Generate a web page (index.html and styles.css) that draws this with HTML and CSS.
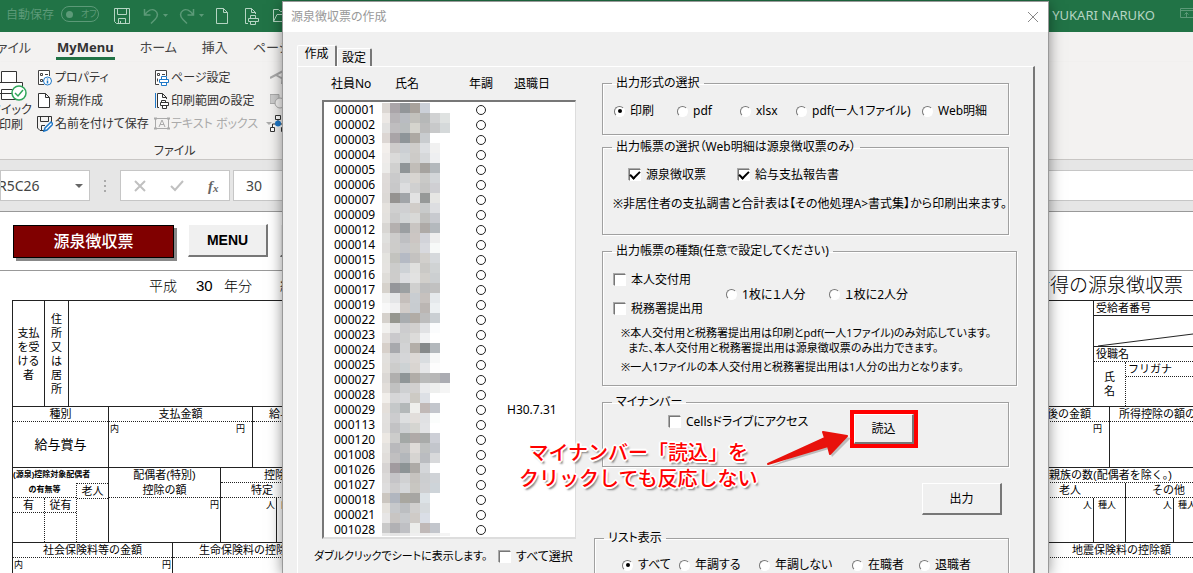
FILE: index.html
```html
<!DOCTYPE html>
<html lang="ja">
<head>
<meta charset="utf-8">
<title>源泉徴収票の作成</title>
<link rel="stylesheet" href="styles.css">
</head>
<body>
<div class="app">
  <header class="titlebar">
    <span class="autosave">自動保存</span>
    <button class="toggle" aria-label="自動保存"><i></i>オフ</button>
    <button class="tb tb-save" aria-label="保存"><svg width="18" height="18" viewBox="0 0 18 18"><path d="M1.5 1.500h15v15h-13l-2-2zM4.500 1.500v6h9v-6M5.500 16.500v-5h7v5M7.500 14v2.500"/></svg></button>
    <button class="tb tb-undo" aria-label="元に戻す"><svg width="26" height="18" viewBox="0 0 26 18"><path d="M1.500 2v6h6M2 7.500C5 3.500 9 1.500 12 3.500s3.500 5.500 0 9l-4 4"/><path class="fill" d="M20 7h5l-2.500 3z"/></svg></button>
    <button class="tb tb-undo" aria-label="やり直し"><svg width="26" height="18" viewBox="0 0 26 18"><path d="M14.500 2v6h-6M14 7.500C11 3.500 7 1.500 4 3.500s-3.500 5.500 0 9l4 4"/><path class="fill" d="M20 7h5l-2.500 3z"/></svg></button>
    <button class="tb tb-doc" aria-label="新規作成"><svg width="14" height="18" viewBox="0 0 14 18"><path d="M1.500 1.500h7l4 4v11h-11zM8.500 1.500v4h4"/></svg></button>
    <button class="tb tb-print" aria-label="印刷プレビュー"><svg width="16" height="18" viewBox="0 0 16 18"><path d="M4 16.500H1.500v-15h6l4 4V7M7.500 1.500v4h4M6.500 11V8.500h5V11M4.500 11.500h10v3h-10zM6.500 14.500h5v3h-5z"/></svg></button>
    <button class="tb" aria-label="開く"><svg width="20" height="18" viewBox="0 0 20 18"><path d="M1.500 14.500v-12h5l2 2h7v3M1.500 14.500l3.500-7h13l-3.500 7z"/></svg></button>
    <span class="user">YUKARI NARUKO</span>
    <button class="tb tb-view dim" aria-label="リボンの表示オプション"><svg width="16" height="14" viewBox="0 0 16 14"><path d="M.5 1.500h15v9H.5zM.5 3.500h15M6.500 10V5.500M4.500 7.500l2-2 2 2"/></svg></button>
  </header>

  <nav class="tabs">
    <a href="#">ファイル</a>
    <a href="#" class="on">MyMenu</a>
    <a href="#">ホーム</a>
    <a href="#">挿入</a>
    <a href="#">ページ</a>
  </nav>

  <section class="ribbon">
    <button class="big">
      <svg width="36" height="32" viewBox="0 0 36 32"><path fill="#fff" stroke="#333" d="M8.500 12V1.500h15V12M1.500 12.500h28v11h-28zM8.500 19.500h15v10h-15z"/><path stroke="#333" stroke-width="2" d="M3 14.500h3"/><circle cx="26" cy="23" r="7" fill="#fff" stroke="#2fa65a" stroke-width="1.500"/><path fill="none" stroke="#2fa65a" stroke-width="1.500" d="M22 23l3 3 5-6"/></svg>
      <span>クイック</span><span>印刷</span>
    </button>
    <div class="col col-a">
      <button class="cmd"><svg width="16" height="18" viewBox="0 0 16 18"><path fill="#fff" stroke="#444" d="M7 15.500H1.500v-14h11V7"/><path stroke="#444" fill="none" d="M3.500 4.500h2v2h-2zM8 5.500h3M3.500 10.500h2v2h-2z"/><circle cx="10.500" cy="12" r="4" fill="#fff" stroke="#1e78c8"/><path stroke="#1e78c8" stroke-width="1.500" d="M10.500 11.500v3M10.500 9.500v1"/></svg>プロパティ</button>
      <button class="cmd"><svg width="16" height="18" viewBox="0 0 16 18"><path fill="#fff" stroke="#333" d="M1.500 1.500h7l4 4v10h-11zM8.500 1.500v4h4"/></svg>新規作成</button>
      <button class="cmd"><svg width="16" height="18" viewBox="0 0 16 18"><path fill="none" stroke="#333" d="M7 15.500H3L.5 13V1.500h14V7M3.500 1.500v5h8v-5M4.500 15v-4.500H8"/><path fill="#fff" stroke="#1e78c8" stroke-width="1.500" d="M7 16l1-3 6-6 2 2-6 6z"/></svg>名前を付けて保存</button>
    </div>
    <div class="col col-b">
      <button class="cmd"><svg width="16" height="18" viewBox="0 0 16 18"><path fill="#fff" stroke="#444" d="M5 15.500H1.500v-14h11V7"/><path stroke="#444" fill="none" d="M3.500 4.500h2v2h-2zM8 5.500h3M3.500 9.500v3"/><path fill="#fff" stroke="#1e78c8" d="M7.500 10V7.500h5V10M5.500 10.500h9v3h-9zM7.500 13.500h5v3h-5z"/></svg>ページ設定</button>
      <button class="cmd"><svg width="16" height="18" viewBox="0 0 16 18"><path fill="#fff" stroke="#333" d="M5 15.500H3.500v-14h5l4 4V7M8.500 1.500v4h4M7.500 10V8.500h4V10M6.500 10.500h8v3h-8zM8.500 13.500h4v3h-4z"/><path stroke="#1e78c8" d="M1.500 1v15"/></svg>印刷範囲の設定</button>
      <button class="cmd off"><svg width="16" height="18" viewBox="0 0 16 18"><path fill="none" stroke="#aaa" d="M1.500 3.500h13v10h-13zM5 12l3-7 3 7M6 9.500h4"/><path stroke="#aaa" stroke-width="2" d="M0 3.500h3M13 3.500h3M0 13.500h3M13 13.500h3"/></svg>テキスト ボックス<i class="caret"></i></button>
      <span class="group-name">ファイル</span>
    </div>
    <div class="col">
      <button class="cmd" aria-label="ワードアート"><svg width="16" height="18" viewBox="0 0 16 18"><path fill="none" stroke="#aaa" stroke-width="2" d="M0 9L13 2l-1 13M6 6l7 4"/></svg></button>
      <button class="cmd" aria-label="図形"><svg width="16" height="18" viewBox="0 0 16 18"><path fill="#ccc" stroke="#aaa" d="M0 2.500h9v9H0z"/><circle cx="10" cy="11" r="5" fill="#f3f2f1" stroke="#aaa"/></svg></button>
      <button class="cmd" aria-label="組織図"><svg width="16" height="18" viewBox="0 0 16 18"><path fill="#fff" stroke="#333" d="M5.500.5h5v4h-5zM.5 12.500h4v4h-4zM11.500 12.500h4v4h-4zM2.500 12V9h11v3M8 5v4"/><circle cx="8" cy="8.500" r="3" fill="#1e78c8"/></svg></button>
    </div>
  </section>

  <section class="formula">
    <div class="namebox"><input aria-label="名前ボックス" value="R5C26"><i class="caret"></i></div>
    <span class="grip"><i></i><i></i><i></i></span>
    <div class="fx">
      <button aria-label="キャンセル"><svg width="12" height="12" viewBox="0 0 12 12"><path d="M1 1l10 10M11 1L1 11"/></svg></button>
      <button aria-label="入力"><svg width="14" height="12" viewBox="0 0 14 12"><path d="M1 6l4 4 8-9"/></svg></button>
      <button class="fn"><i>f</i><sub>x</sub></button>
    </div>
    <input class="bar" aria-label="数式バー" value="30">
  </section>

  <main class="sheet">
    <div class="actions">
      <button class="crimson">源泉徴収票</button>
      <button class="raised menu">MENU</button>
      <button class="raised more" aria-label="印刷"></button>
    </div>
    <div class="heading">
      <span class="era">平成</span><span class="year">30</span><span class="era">年分</span><span class="era pay">給</span>
      <span class="doc-name">所得の源泉徴収票</span>
    </div>

    <div class="form">
      <div class="band band-a">
        <div class="cell payer"><p>支払を受ける者</p></div>
        <div class="cell address"><p>住所又は居所</p></div>
        <div class="cell grow"></div>
        <div class="cell person">
          <div class="line pad">受給者番号</div>
          <svg class="slash" viewBox="0 0 100 30" preserveAspectRatio="none"><path d="M4 30L100 18"/></svg>
          <div class="line pad role">役職名</div>
          <div class="person-name">
            <div class="shimei"><span>氏</span><span>名</span></div>
            <div class="furi"><div class="line pad dot-b">フリガナ</div></div>
          </div>
        </div>
      </div>

      <div class="band">
        <div class="cell w95"><div class="line mid dot-b">種別</div><div class="big-value">給与賞与</div></div>
        <div class="cell w144"><div class="line mid dot-b">支払金額</div><div class="unit"><span>内</span><span class="yen">円</span></div></div>
        <div class="cell grow"><div class="line dot-b in16">給与</div></div>
        <div class="cell w144 bare"><div class="line end dot-b">後の金額</div><div class="unit"><span></span><span class="yen">円</span></div></div>
        <div class="cell w84"><div class="line dot-b in10">所得控除の額の</div></div>
      </div>

      <div class="band">
        <div class="cell w95 spouse">
          <div class="line tiny">(源泉)控除対象配偶者</div>
          <div class="split">
            <div class="spouse-has">
              <div class="line tiny mid dot-b">の有無等</div>
              <div class="split">
                <div class="yes"><div class="line mid dot-b">有</div></div>
                <div class="also"><div class="line mid dot-b">従有</div></div>
              </div>
            </div>
            <div class="aged"><div class="line mid dot-b">老人</div></div>
          </div>
        </div>
        <div class="cell w112"><div class="line mid">配偶者(特別)</div><div class="line mid dot-b">控除の額</div><div class="unit"><span></span><span>円</span></div></div>
        <div class="cell grow">
          <div class="line dot-b in44">控除</div>
          <div class="line dot-b in30">特定</div>
          <div class="split"><div class="unit w56"><span></span><span>人</span></div><div class="unit rule"><span>内</span></div></div>
        </div>
        <div class="cell w160 bare">
          <div class="line dot-b in16">親族の数(配偶者を除く。)</div>
          <div class="split">
            <div class="kin-aged">
              <div class="line dot-b in26">老人</div>
              <div class="split"><div class="unit w60"><span></span><span>人</span></div><div class="unit rule"><span>種人</span></div></div>
            </div>
            <div class="kin-other">
              <div class="line dot-b in26">その他</div>
              <div class="split"><div class="unit w47"><span></span><span>人</span></div><div class="unit rule"><span>種人</span></div></div>
            </div>
          </div>
        </div>
      </div>

      <div class="band">
        <div class="cell w159"><div class="line mid dot-b">社会保険料等の金額</div><div class="unit"><span>内</span><span>円</span></div></div>
        <div class="cell grow"><div class="line dot-b in26">生命保険料の控除</div></div>
        <div class="cell w160 bare"><div class="line dot-b in40">地震保険料の控除額</div></div>
      </div>
    </div>
  </main>

  <div class="dialog" role="dialog" aria-label="源泉徴収票の作成">
    <div class="dialog-title"><span>源泉徴収票の作成</span><button aria-label="閉じる"><svg width="12" height="12" viewBox="0 0 12 12"><path d="M1 1l10 10M11 1L1 11"/></svg></button></div>
    <div class="dialog-tabs"><button class="current">作成</button><button>設定</button></div>
    <div class="page">
      <div class="left">
        <table class="staff">
          <thead><tr><th>社員No</th><th>氏名</th><th>年調</th><th>退職日</th></tr></thead>
          <tbody id="staff"></tbody>
        </table>
        <div class="list-foot">
          <span>ダブルクリックでシートに表示します。</span>
          <label class="all"><input type="checkbox">すべて選択</label>
        </div>
      </div>
      <div class="right">
        <fieldset class="format">
          <legend>出力形式の選択</legend>
          <label><input type="radio" name="format" checked>印刷</label>
          <label><input type="radio" name="format">pdf</label>
          <label><input type="radio" name="format">xlsx</label>
          <label><input type="radio" name="format">pdf(一人1ファイル)</label>
          <label><input type="radio" name="format">Web明細</label>
        </fieldset>
        <fieldset class="report">
          <legend>出力帳票の選択（Web明細は源泉徴収票のみ）</legend>
          <div class="report-row">
            <label><input type="checkbox" checked>源泉徴収票</label>
            <label><input type="checkbox" checked>給与支払報告書</label>
          </div>
          <p>※非居住者の支払調書と合計表は【その他処理A&gt;書式集】から印刷出来ます。</p>
        </fieldset>
        <fieldset class="kind">
          <legend>出力帳票の種類(任意で設定してください)</legend>
          <div class="kind-grid">
            <div class="kind-checks">
              <label><input type="checkbox">本人交付用</label>
              <label><input type="checkbox">税務署提出用</label>
            </div>
            <label><input type="radio" name="per">1枚に１人分</label>
            <label><input type="radio" name="per">１枚に2人分</label>
          </div>
          <p class="hang">※本人交付用と税務署提出用は印刷とpdf(一人1ファイル)のみ対応しています。<br>また、本人交付用と税務署提出用は源泉徴収票のみ出力できます。</p>
          <p>※一人1ファイルの本人交付用と税務署提出用は1人分の出力となります。</p>
        </fieldset>
        <fieldset class="mynumber">
          <legend>マイナンバー</legend>
          <div class="mynumber-row">
            <label><input type="checkbox">Cellsドライブにアクセス</label>
            <span class="mark"><button class="raised">読込</button></span>
          </div>
        </fieldset>
        <button class="raised output">出力</button>
        <fieldset class="filter">
          <legend>リスト表示</legend>
          <label><input type="radio" name="filter" checked>すべて</label>
          <label><input type="radio" name="filter">年調する</label>
          <label><input type="radio" name="filter">年調しない</label>
          <label><input type="radio" name="filter">在職者</label>
          <label><input type="radio" name="filter">退職者</label>
        </fieldset>
      </div>
    </div>
    <svg class="mosaic" id="mosaic" width="84" height="433"></svg>
    <p class="note">マイナンバー「読込」を<br>クリックしても反応しない</p>
    <svg class="arrow" width="90" height="44" viewBox="0 0 90 44"><path fill="#888" opacity=".5" d="M6 40l59-25-3-8 26 4-19 19-3-8z"/><path fill="#e8120c" stroke="#e8120c" stroke-width="2" stroke-linejoin="round" d="M5 37l57-26-2-6 24 4-17 18-2-8z"/></svg>
  </div>
</div>
<script src="script.js"></script>
</body>
</html>
```
FILE: script.js
```js
const codes = ('000001 000002 000003 000004 000005 000006 000007 000009 000012 000014 ' +
  '000015 000016 000017 000019 000022 000023 000024 000025 000027 000028 ' +
  '000029 000113 000120 001008 001026 001027 000018 000021 001028').split(' ');
const retired = { '000029': 'H30.7.31' };

document.getElementById('staff').innerHTML = codes.map(code =>
  `<tr><td>${code}</td><td></td><td><svg class="ring" width="12" height="12" viewBox="0 0 12 12"><circle cx="6" cy="6" r="4.500"/></svg></td><td>${retired[code] || ''}</td></tr>`
).join('');

// Pixelated name column: one line per 10px strip, one colour per block.
const strips = `dcd7d3 aaa5a9 929699 a8a29c cbd0d8
ece8e5 b7b4b7 b9bcc1 c2c1bc b6b8b8 d1d2d3 dfe2e1
e2e1e0 bfbdbf b9bdbe d5d4cd bcbcbc c8c9ca d5d9da
dcd6d3 a9a4a7 8e9599 ada9a3 c9cccf
f3efec cecccb cbcfd3 cfcdca dddfe2 f1f1f1
efecea dadad9 d1d5d7 cdcbc8 d6d8da eeeff1
ecebe9 d0d0cf 8f9598 c1bdb8 a6a39f b3b8bc
dfdbd9 cacacb d2d4d6 d8d5d1 c9c9c7 d3d6d9
dedad8 c8c8c9 dcdddf d0d0d0 c5c5c4 cfcfd3
dcd9d6 959391 a1a5a9 e2e2e2 969998 e6e6e4
e5e2de cfcfcf cfd0d2 d1cdc9 c8caca dddee1
e3e1de cacaca d3d6d7 d9d9d7 bfbfbd c8cacf
d8d6d3 b4b0af 9b9fa2 c9c5c2 aeaaa7 b4b9bd
e0e0de cdcccb bebfc2 ccc6c3 d2d3d9 eeeeee
dedcda cdccca c7c8cb cccac6 d8d9de f7f9f8
e4e3df c3c3bf b5bac4 c4c2c0 d1cfcc d6d9dc
e5e3e0 cccccb ced2d6 e0e0de cac9c6 d0d3d4
dfddd9 cdcccb dddee1 e2e2e1 d1cfcb cccfd1
d6d2cc 95969a 9ca0a2 d0d0cf bebebe c1c1c1
f0f0ef e4e5e7 c5bfbc c9cdd1 c6c1be e5e9ec
f8f8f8 f0f0f1 d1ccc9 c8ccd0 bbb6b3 ecf0f2
d5d1cc 95968f a9adb0 b1aca6 bdbdbd cacfd3
f2f1ef e1e1e1 ccccce d2d0ce e1e2e4 fbfcfd
e4e0dd cac9cc cfd0d0 dcdbd9 f1f2f3
d7d0ca a8a9ad d2d3d4 b3aea8 868a8b b3b8bc
e2e0dd d1d1d2 d5d6d8 dcd8d5 d9dde0 f7f8f8
e2dfdb cccccb cdd2d4 d9d5d1 e6e7e9 fdfdfd
dbd8d5 b0afae 8f9698 b1ada8 babbbb b7b7b7 abacb2
e2deda c1c1c1 ced0d2 d2d0cf e9eaec eeefee f5f5f5
f1eeea d6d6d7 d9dadd cdcac4 dde0e5
e4dfda c5c8c9 b3b8b9 efefec c1b9b7 c3c6cc
e2e0de ccccce dddfe0 e2dedb e0e1e3 fbfdfc
e1dfdd c2c2c4 cdd0d2 d5d5d1 e2e3e5
ece8e3 cccccb a3a8a6 b0aaa8 a9abaa cdcfd6
e4e2df b9b9bc bebfc0 dfdbd8 bec0c0 c3c6cc
e1dedb c0bfc0 b3b7bb d6d4d1 babcc0 d8d9db
d7d4d3 a19b9f 8d9496 adaaa6 d4d6d9
dcdad9 c5c4c7 d0d1d2 c6c3bf ccced0 d0d3d7
dedddd cdcccd d6d8da c8c6c1 cecfd1 ced4d9
cbc6c0 b1b6bf a9a7a0 a7a6a3 dce2e6
e5e2dd c6c8cb bcbec1 d0cfce d6dadd
e7e6e6 c8c5c3 c7c9cc cfcbc7 dadee6
c9c9c9 b1b1b4 bfc0c4 ecedeb c0b9b8 c3c6cc
e8e8e8 e4e4e4 e6e6e6 efefef ededed f0f0f0 f4f4f4`.split('\n');

document.getElementById('mosaic').innerHTML = strips.map((strip, row) =>
  strip.split(' ').map((c, i) =>
    `<rect x="${i ? i * 10 - 2 : 0}" y="${row * 10}" width="${i ? 10 : 8}" height="10" fill="#${c}"/>`
  ).join('')
).join('');
```
FILE: styles.css
```css
* { box-sizing: border-box; }

body {
  margin: 0;
  font: 12px/16px "Noto Sans", "Noto Sans CJK JP", sans-serif;
  font-feature-settings: "palt";
  color: #000;
}

button, input { font: inherit; font-feature-settings: inherit; color: inherit; margin: 0; padding: 0; }
button { border: 0; background: none; white-space: nowrap; }
p { margin: 0; }
svg { display: block; flex: none; }
a { color: inherit; text-decoration: none; }

.app { position: relative; height: 100vh; overflow: hidden; background: #fff; display: flex; flex-direction: column; }
.app > * { flex: none; }

/* Title bar */
.titlebar { display: flex; align-items: center; height: 32px; padding-left: 6px; background: #217346; color: #5c9a78; }
.autosave { width: 55px; padding-bottom: 3px; }
.toggle { display: flex; align-items: center; gap: 8px; width: 38px; height: 16px; margin: 0 14px 4px 0; padding-left: 4px; border: 1px solid #5c9a78; border-radius: 8px; font-size: 9px; line-height: 12px; color: #5c9a78; }
.toggle i { width: 7px; height: 7px; border-radius: 50%; background: #5c9a78; }
.tb svg { fill: none; stroke: #b5d5c3; }
.tb-save { margin-right: 12px; }
.tb-undo { margin-right: 10px; }
.tb-undo svg, .dim svg { stroke: #5c9a78; }
.tb-undo svg { stroke-width: 1.5; }
.tb-undo .fill { fill: #5c9a78; stroke: none; }
.tb-doc { margin-right: 15px; }
.tb-print { margin-right: 12px; }
.user { margin-left: auto; margin-right: 25px; padding-bottom: 3px; color: #b5d5c3; font-size: 13px; }
.tb-view { width: 13px; overflow: hidden; padding-bottom: 4px; }

/* Ribbon */
.tabs { display: flex; gap: 25px; height: 30px; padding-top: 3px; background: #f3f2f1; font-size: 13px; line-height: 24px; color: #444; }
.tabs a { white-space: nowrap; }
.tabs a:first-child { margin-left: -14px; }
.tabs .on { padding: 0 1px; border-bottom: 3px solid #217346; height: 25px; font-weight: 700; color: #333; }
.ribbon { display: flex; height: 98px; padding-top: 4px; border-bottom: 1px solid #c8c6c4; background: #f3f2f1; color: #333; box-shadow: 0 2px 3px #d0d0d0; }
.big { display: flex; flex-direction: column; align-items: center; width: 38px; margin-left: -8px; padding-top: 4px; line-height: 15px; }
.col { display: flex; flex-direction: column; }
.col-a { width: 118px; margin-left: 7px; }
.col-b { width: 116px; margin-left: -1px; }
.cmd { display: flex; align-items: center; gap: 2px; height: 23px; }
.col-b .cmd { gap: 1px; }
.cmd.off { color: #aaa; }
.caret { width: 0; border: 4px solid transparent; border-top-color: #666; border-bottom: 0; }
.off .caret { border-width: 3px; border-bottom: 0; border-top-color: #aaa; margin-left: 7px; }
.group-name { padding-top: 8px; }

/* Formula bar */
.formula { display: flex; align-items: center; height: 51px; background: #e6e6e6; color: #444; font-size: 14px; }
.formula > div, .bar { height: 31px; background: #fff; border: 1px solid #c6c6c6; }
.namebox { display: flex; align-items: center; width: 90px; border-left: 0; padding-right: 6px; }
.namebox input { flex: 1; min-width: 0; border: 0; background: none; text-indent: -3px; }
.grip { display: grid; gap: 3px; width: 30px; justify-content: center; }
.grip i { width: 2px; height: 2px; background: #aaa; }
.fx { display: flex; align-items: center; gap: 24px; width: 110px; padding-left: 13px; }
.fx svg { fill: none; stroke: #c0c0c0; stroke-width: 2; }
.fn { font-family: "Liberation Serif", serif; font-size: 15px; font-weight: 700; line-height: 20px; color: #666; }
.fn sub { font-size: 11px; font-style: italic; vertical-align: -1px; line-height: 0; }
.bar { flex: 1; min-width: 0; margin-left: 3px; padding-left: 12px; border-right: 0; }

/* Worksheet */
.sheet { border-top: 1px solid #999; font-family: "Liberation Sans", "Noto Sans CJK JP", sans-serif; font-feature-settings: normal; font-size: 11px; white-space: nowrap; }
.actions { display: flex; align-items: flex-start; height: 59px; padding: 12px 0 0 13px; border-bottom: 1px solid #999; }
.crimson { width: 161px; height: 33px; margin: 1px 14px 0 0; border: 1px solid #000; background: #800000; color: #fff; font-size: 16px; font-weight: 500; box-shadow: 3px 3px #888; }
.raised { background: #f0f0f0; border: solid; border-width: 1px 2px 2px 1px; border-color: #fff #777 #777 #fff; }
.menu { width: 80px; height: 33px; margin-right: 12px; font-size: 14px; font-weight: 700; color: #000; }
.more { width: 80px; height: 33px; }
.heading { display: flex; align-items: center; height: 29px; padding-left: 149px; }
.era, .year { font-size: 14px; font-weight: 300; }
.year { font-size: 15px; width: 28px; margin-left: 19px; }
.pay { margin-left: 28px; }
.doc-name { margin-left: auto; margin-right: 10px; font-size: 19px; font-weight: 300; }

.form { margin-left: 12px; border-left: 1px solid #222; }
.band { display: flex; min-height: 60px; border-top: 1px solid #222; }
.band:nth-child(1) { min-height: 106px; }
.band:nth-child(3) { min-height: 75px; }
.cell { display: flex; flex-direction: column; flex: none; overflow: hidden; border-left: 1px solid #222; }
.cell:first-child, .bare { border-left: 0; }
.grow { flex: 1; }
.w95 { width: 95px; } .w144 { width: 144px; } .w112 { width: 112px; } .w159 { width: 159px; } .w160 { width: 160px; } .w84 { width: 84px; }
.w56 { flex: 0 0 55px; } .w60 { flex: 0 0 60px; } .w47 { flex: 0 0 47px; }
.line { height: 15px; line-height: 14px; overflow: hidden; }
.dot-b { border-bottom: 1px dotted #222; }
.mid { text-align: center; }
.end { text-align: right; padding-right: 18px; }
.in10 { padding-left: 9px; } .in16 { padding-left: 16px; } .in26 { padding-left: 26px; }
.in30 { padding-left: 30px; } .in40 { padding-left: 39px; } .in44 { padding-left: 43px; }
.tiny { font-size: 8px; font-weight: 700; }
.pad { padding-left: 2px; }
.unit { display: flex; justify-content: space-between; padding: 0 1px; font-size: 9px; line-height: 15px; }
.yen { padding-right: 6px; }
.big-value { font-size: 13px; line-height: 45px; text-align: center; }
.split { display: flex; flex: 1; }
.rule { border-left: 1px solid #222; flex: 1; padding-left: 4px; }
.payer { width: 31px; align-items: center; justify-content: center; white-space: normal; line-height: 14px; text-align: center; }
.payer p { width: 22px; }
.address { width: 24px; align-items: center; justify-content: center; white-space: normal; line-height: 14px; }
.address p { width: 11px; }
.person { width: 100px; }
.person .line { border-bottom: 1px solid #222; }
.slash { width: 100%; height: 30px; fill: none; stroke: #222; }
.person .role { border-top: 1px solid #222; border-bottom: 1px dotted #222; height: 16px; }
.person .furi .line { border-bottom-style: dotted; }
.person-name { display: flex; flex: 1; }
.shimei { display: flex; flex-direction: column; align-items: center; justify-content: center; width: 31px; line-height: 14px; }
.furi { flex: 1; border-left: 1px dotted #222; }
.spouse-has { display: flex; flex-direction: column; flex: 0 0 63px; }
.yes { flex: 0 0 31px; }
.also, .aged { flex: 1; border-left: 1px dotted #222; }
.aged { border-top: 1px dotted #222; }
.kin-aged { flex: 0 0 92px; display: flex; flex-direction: column; }
.kin-other { flex: 1; display: flex; flex-direction: column; border-left: 1px solid #222; }

/* Dialog window, floating over the workbook */
.dialog { position: absolute; left: 283px; top: 2px; bottom: 0; width: 765px; background: #f0f0f0; box-shadow: 0 0 0 1px #999, 0 2px 14px rgba(0, 0, 0, .5); white-space: nowrap; }
.dialog-title { display: flex; align-items: center; justify-content: space-between; height: 30px; padding: 0 9px 1px 8px; background: #fff; color: #999; }
.dialog-title svg { fill: none; stroke: #888; }
.dialog-tabs { display: flex; align-items: flex-end; padding: 12px 0 0 14px; height: 34px; }
.dialog-tabs button { height: 18px; width: 35px; border: 1px solid #fff; border-right: 2px solid #777; border-bottom: 0; border-radius: 2px 2px 0 0; line-height: 16px; }
.dialog-tabs .current { height: 21px; width: 40px; padding-bottom: 4px; }
.page { display: flex; margin: 0 13px 0 14px; padding: 8px 16px 0 16px; border: 1px solid #fff; border-right: 2px solid #777; border-bottom: 0; min-height: 520px; }
.left { flex: 0 0 280px; }
.right { flex: 1; min-width: 0; display: flex; flex-direction: column; }

.staff { display: block; margin-left: 8px; width: 254px; border-spacing: 0; }
.staff thead, .staff tbody { display: block; }
.staff tr { display: grid; }
.staff th, .staff td { padding: 0; font-weight: 400; text-align: left; }
.staff thead { padding: 1px 0 8px 9px; }
.staff thead tr { grid-template-columns: 64px 74px 45px 1fr; }
.staff tbody { border: 2px solid #fff; border-width: 2px 1px 2px 2px; border-color: #777 #ddd #ddd #777; background: #fff; padding-left: 10px; }
.staff tbody tr { grid-template-columns: 135px 38px 1fr; line-height: 15px; height: 15px; }
.staff tbody td:nth-child(2) { display: none; }
.ring { margin-top: 2px; margin-left: 6px; fill: none; stroke: #222; }
.list-foot { display: flex; padding-top: 9px; }
.list-foot span { width: 185px; font-size: 11px; }
.all { padding-top: 1px; }

label { display: flex; align-items: center; gap: 5px; }
input[type="checkbox"], input[type="radio"] { appearance: none; flex: none; width: 12px; height: 12px; border: 1px solid; border-color: #777 #fff #fff #777; background: #fff; display: grid; place-items: center; }
input[type="checkbox"] { box-shadow: -1px -1px #aaa; }
input[type="radio"] { border-radius: 50%; width: 11px; height: 11px; }
input[type="radio"]:checked::before { content: ""; width: 4px; height: 4px; border-radius: 50%; background: #000; }
input[type="checkbox"]:checked::before { content: ""; width: 8px; height: 4px; border: solid #000; border-width: 0 0 2px 2px; transform: translateY(-1px) rotate(-45deg); }

fieldset { --inset: 0px; margin: 0 8px; padding: 0 0 0 var(--inset); min-width: 0; border: 1px solid #a0a0a0; box-shadow: 1px 1px #fff, inset 1px 1px #fff; }
legend { margin-left: calc(9px - var(--inset)); padding: 0 4px; line-height: 16px; }
.format { --inset: 11px; display: grid; grid-template-columns: 63px 63px 56px 126px 1fr; padding-top: 12px; padding-bottom: 15px; margin-bottom: 4px; }
.report { --inset: 10px; padding-top: 12px; padding-bottom: 22px; margin-bottom: 8px; }
.report-row { display: flex; gap: 32px; padding: 0 0 13px 16px; }
.kind { --inset: 11px; margin-right: 0; padding-top: 13px; padding-bottom: 11px; margin-bottom: 8px; }
.kind-grid { display: flex; gap: 23px; align-items: center; padding-bottom: 8px; }
.kind-checks { display: grid; gap: 13px; }
.kind p { padding-left: 7px; font-size: 11px; line-height: 15px; }
.kind .hang { padding-left: 14px; text-indent: -7px; margin-bottom: 4px; }
.mynumber { margin-bottom: 16px; padding-bottom: 18px; }
.mynumber-row { display: flex; justify-content: space-between; align-items: flex-start; padding: 0 90px 0 66px; }
.mynumber-row label { padding-top: 4px; }
.mark { display: flex; border: 4px solid #f00; }
.mark button { width: 60px; height: 30px; }
.output { align-self: flex-end; width: 80px; height: 32px; margin: 0 15px 15px 0; }
.filter { --inset: 27px; display: grid; grid-template-columns: 57px 80px 93px 67px 1fr; margin-left: 0; padding-top: 11px; padding-bottom: 12px; }

/* Call-out drawn over the dialog */
.mosaic { position: absolute; left: 99px; top: 101px; }
.note { position: absolute; left: 236px; top: 437px; text-align: center; font: 500 20px/26px "Noto Sans CJK JP", sans-serif; font-feature-settings: normal; color: #f00; text-shadow: -1px -1px #fff, 1px -1px #fff, -1px 1px #fff, 1px 1px #fff, -2px 0 #fff, 2px 0 #fff, 0 -2px #fff, 0 2px #fff, 2px 3px 2px #777; }
.arrow { position: absolute; left: 480px; top: 425px; }
```
